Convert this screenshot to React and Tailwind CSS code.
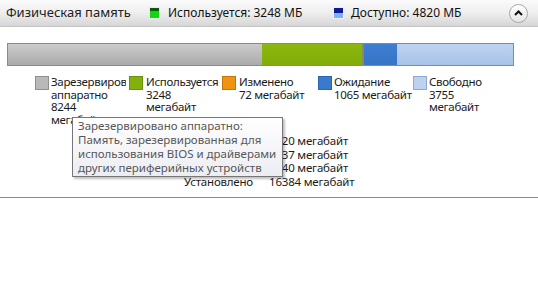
import React from "react";

const font = { fontFamily: '"Noto Sans", "Open Sans", sans-serif' };

function Swatch({ cls }) {
  return <div className={`w-[14px] h-[14px] shrink-0 border ${cls}`} />;
}

export default function App() {
  return (
    <div className="w-[538px] h-[282px] bg-white text-[11.5px] text-[#1a1a1a] overflow-hidden relative" style={font}>
      {/* header */}
      <div className="h-[27px] flex items-center pl-[6px] bg-gradient-to-b from-[#fbfbfb] via-[#eeeeee] to-[#d6d6d6] border-b border-[#c4c4c4] text-[12px]">
        <div className="w-[143px] text-[13px] text-[#222]">Физическая память</div>
        <div className="w-[11px] h-[12px] flex flex-col border border-[#e8e8e8] shrink-0">
          <div className="h-[3px] bg-[#0a5a0a]" />
          <div className="flex-1 bg-[#12d612]" />
        </div>
        <div className="ml-[8px] w-[165px] text-[#111]">Используется: 3248 МБ</div>
        <div className="w-[11px] h-[12px] flex flex-col border border-[#f0f0f0] shrink-0">
          <div className="h-[5px] bg-[#0a1a9a]" />
          <div className="flex-1 bg-[#7fb0f4]" />
        </div>
        <div className="ml-[7px] text-[#111]">Доступно: 4820 МБ</div>
        <div className="ml-auto mr-[10px] w-[19px] h-[19px] rounded-full border border-[#a8a8a8] bg-gradient-to-b from-white to-[#e6e6e6] flex items-center justify-center">
          <svg width="9" height="6" viewBox="0 0 9 6">
            <path d="M1 5 L4.5 1.5 L8 5" fill="none" stroke="#111" strokeWidth="2" />
          </svg>
        </div>
      </div>

      {/* bar */}
      <div className="ml-[7px] mr-[24px] mt-[16px] h-[23px] border border-[#8a8a8a] flex">
        <div className="w-[254px] bg-gradient-to-b from-[#cbcbcb] to-[#ababab]" />
        <div className="w-[100px] bg-gradient-to-b from-[#8cb70e] to-[#82ad0a]" />
        <div className="w-[2px] bg-[#8a8a5c]" />
        <div className="w-[33px] bg-gradient-to-b from-[#3d7fd2] to-[#3774c4]" />
        <div className="flex-1 bg-gradient-to-b from-[#bdd4f0] to-[#a8c3e8]" />
      </div>

      {/* legend */}
      <div className="mt-[10px] pl-[35px] flex leading-[12.5px] tracking-[-0.3px]">
        <div className="w-[94px] flex gap-[2px]">
          <Swatch cls="bg-[#b9b9b9] border-[#8f8f8f]" />
          <div className="w-[75px] overflow-hidden whitespace-nowrap">
            Зарезервировано<br />аппаратно<br />8244<br />мегабайт
          </div>
        </div>
        <div className="w-[93px] flex gap-[3px]">
          <Swatch cls="bg-[#82b00c] border-[#6a9408]" />
          <div className="whitespace-nowrap">Используется<br />3248<br />мегабайт</div>
        </div>
        <div className="w-[96px] flex gap-[3px]">
          <Swatch cls="bg-[#ee940e] border-[#c47408]" />
          <div className="whitespace-nowrap">Изменено<br />72 мегабайт</div>
        </div>
        <div className="w-[95px] flex gap-[2px]">
          <Swatch cls="bg-[#3a7acc] border-[#2c64b0]" />
          <div className="whitespace-nowrap">Ожидание<br />1065 мегабайт</div>
        </div>
        <div className="flex gap-[2px]">
          <Swatch cls="bg-[#bcd2ef] border-[#8fa9cc]" />
          <div className="whitespace-nowrap">Свободно<br />3755<br />мегабайт</div>
        </div>
      </div>

      {/* stats */}
      <div className="mt-[8px] grid grid-cols-[253px_auto] gap-x-[16px] leading-[13.5px] tracking-[-0.2px]">
        <div className="text-right">Доступно</div><div>4820 мегабайт</div>
        <div className="text-right">Кэшировано</div><div>1137 мегабайт</div>
        <div className="text-right">Всего</div><div>8140 мегабайт</div>
        <div className="text-right">Установлено</div><div>16384 мегабайт</div>
      </div>

      <div className="mt-[9px] h-px bg-[#8a8a8a]" />

      {/* tooltip */}
      <div className="absolute left-[72px] top-[117px] w-[211px] h-[60px] border border-[#767676] bg-gradient-to-b from-white to-[#ecedf2] shadow-[2px_2px_2px_rgba(0,0,0,0.25)] pl-[5px] pt-[1px] text-[#575757] leading-[14px] whitespace-nowrap">
        Зарезервировано аппаратно:<br />
        Память, зарезервированная для<br />
        использования BIOS и драйверами<br />
        других периферийных устройств
      </div>
    </div>
  );
}
